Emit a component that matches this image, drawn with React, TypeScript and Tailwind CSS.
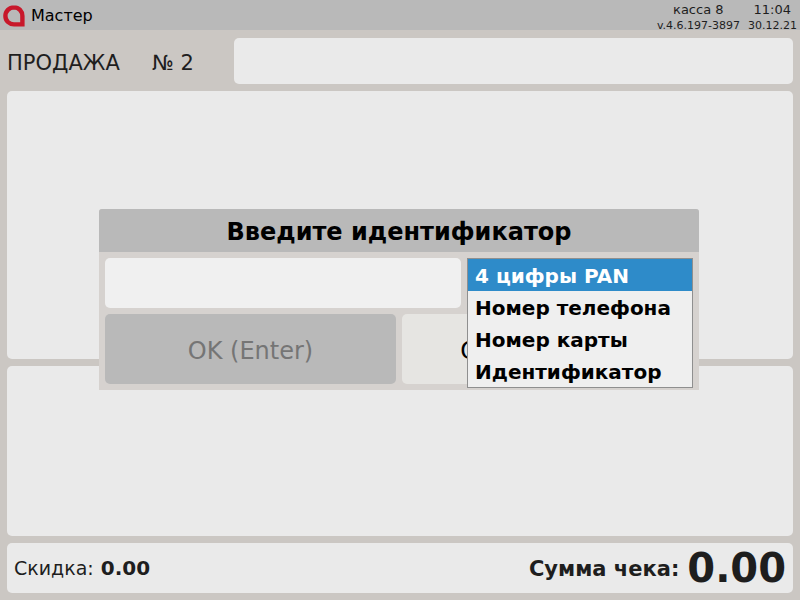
export default function App() {
  return (
    <div className="relative w-[800px] h-[600px] overflow-hidden bg-[#cbc7c3] text-[#1e1e1e] font-['DejaVu_Sans',sans-serif]">
      <div className="h-[30px] bg-[#b9b9b9] flex justify-between">
        <div className="flex items-center">
          <svg width="22" height="22" viewBox="0 0 22 22" className="ml-[3px] mt-[1px]">
            <path d="M11 2.4 C6.2 2.4 2.4 6.2 2.4 11 C2.4 15.8 6.2 19.4 11 19.4 H19.4 V11 C19.4 6.2 15.8 2.4 11 2.4 Z" fill="none" stroke="#c8182b" strokeWidth="4.4" />
          </svg>
          <span className="ml-[6px] mt-[2px] text-[16px] text-black">Мастер</span>
        </div>
        <div className="flex flex-col items-end pr-[3px] pt-[2px] text-[11px] leading-[15px]">
          <div className="flex text-[13px] leading-[15px]">
            <span>касса 8</span>
            <span className="ml-[30px] mr-[6px]">11:04</span>
          </div>
          <div className="flex mt-[1px]">
            <span>v.4.6.197-3897</span>
            <span className="ml-[8px]">30.12.21</span>
          </div>
        </div>
      </div>
      <div className="flex flex-col gap-[7px] px-[7px] pt-[8px]">
        <div className="flex h-[46px] items-center">
          <span className="w-[145px] text-[21px] mt-[6px]">ПРОДАЖА</span>
          <span className="w-[82px] text-[21px] mt-[6px]">№ 2</span>
          <div className="flex-1 h-full bg-[#eaeaea] rounded-[5px]" />
        </div>
        <div className="h-[268px] bg-[#eaeaea] rounded-[5px]" />
        <div className="h-[170px] bg-[#eaeaea] rounded-[5px]" />
        <div className="h-[50px] bg-[#eaeaea] rounded-[5px] flex items-center justify-between pl-[7px] pr-[7px]">
          <div className="flex items-baseline text-[19px]">
            <span>Скидка:</span>
            <b className="ml-[7px] text-[20px]">0.00</b>
          </div>
          <div className="flex items-center font-bold">
            <span className="text-[21px] mt-[4px]">Сумма чека:</span>
            <span className="ml-[8px] text-[40px] leading-[50px]">0.00</span>
          </div>
        </div>
      </div>

      <div className="absolute left-[99px] top-[209px] w-[600px] h-[181px] bg-[#d6d2cf] rounded-t-[3px] flex flex-col">
        <div className="h-[43px] pt-[2px] bg-[#b9b9b9] rounded-t-[3px] flex items-center justify-center text-[24px] font-bold text-black">
          Введите идентификатор
        </div>
        <div className="flex flex-col gap-[6px] p-[6px]">
          <div className="w-[356px] h-[50px] bg-[#f0f0f0] rounded-[5px]" />
          <div className="flex gap-[6px]">
            <div className="w-[291px] h-[70px] pt-[4px] bg-[#b9b9b9] rounded-[5px] flex items-center justify-center text-[24px] text-[#757575]">
              OK (Enter)
            </div>
            <div className="w-[291px] h-[70px] pt-[4px] pr-[11px] bg-[#e6e5e2] rounded-[5px] flex items-center justify-center text-[24px] text-black">
              Отмена (Esc)
            </div>
          </div>
        </div>
      </div>

      <div className="absolute left-[467px] top-[258px] w-[226px] h-[130px] bg-[#efefef] border border-[#8f8f8f] text-[20px] font-bold text-black flex flex-col">
        <div className="h-[32px] pt-[2px] bg-[#2e8bc9] text-white flex items-center pl-[7px]">4 цифры PAN</div>
        <div className="h-[32px] pt-[2px] flex items-center pl-[7px]">Номер телефона</div>
        <div className="h-[32px] pt-[2px] flex items-center pl-[7px]">Номер карты</div>
        <div className="h-[32px] pt-[2px] flex items-center pl-[7px]">Идентификатор</div>
      </div>
    </div>
  );
}
